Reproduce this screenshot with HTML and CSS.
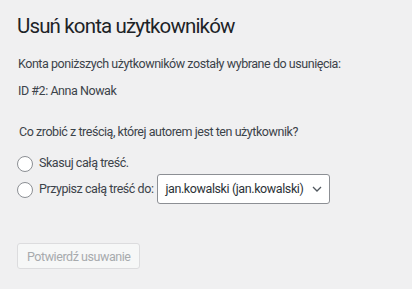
FILE: index.html
```html
<!DOCTYPE html>
<html lang="pl">
<head>
    <meta charset="UTF-8">
    <meta name="viewport" content="width=device-width, initial-scale=1.0">
    <title>Usuń konta użytkowników</title>
    <link rel="stylesheet" href="styles.css">
</head>
<body>
    <div class="wrap">
        <h1>Usuń konta użytkowników</h1>
        <p class="intro">Konta poniższych użytkowników zostały wybrane do usunięcia:</p>
        <ul class="users">
            <li>ID #2: Anna Nowak</li>
        </ul>

        <fieldset class="content-choice">
            <p class="legend">Co zrobić z treścią, której autorem jest ten użytkownik?</p>
            <label class="choice">
                <input type="radio" name="delete_option">
                <span>Skasuj całą treść.</span>
            </label>
            <label class="choice choice-select">
                <input type="radio" name="delete_option">
                <span>Przypisz całą treść do:</span>
                <span class="select-box">
                    <span>jan.kowalski (jan.kowalski)</span>
                    <svg class="chevron" width="10" height="10" viewBox="0 0 10 10"><path d="M1 3l4 4 4-4" fill="none" stroke="#50575e" stroke-width="1.3"/></svg>
                </span>
            </label>
        </fieldset>

        <button class="button" disabled>Potwierdź usuwanie</button>
    </div>
</body>
</html>
```

FILE: styles.css
```css
body {
    margin: 0;
    background-color: #f0f0f1;
    color: #3c434a;
    font-family: Roboto, "Liberation Sans", sans-serif;
    font-size: 12.5px;
    letter-spacing: -0.45px;
    line-height: 18px;
}

.wrap {
    padding: 0 17px;
}

h1 {
    margin: 0;
    padding: 12px 0 0;
    font-size: 20.5px;
    font-weight: 400;
    letter-spacing: -0.85px;
    line-height: 29px;
    color: #1d2327;
}

p {
    margin: 0;
}

.intro {
    margin-top: 14px;
    padding-left: 1px;
}

.users {
    list-style: none;
    margin: 9px 0 0;
    padding: 0 0 0 1px;
}

/* Wybór treści */
.content-choice {
    border: 0;
    margin: 23px 0 0;
    padding: 0;
}
.legend {
    margin-bottom: 13px;
    padding-left: 2px;
}
.choice {
    display: flex;
    align-items: center;
    gap: 6px;
}
.choice input {
    flex-shrink: 0;
    appearance: none;
    width: 16px;
    height: 16px;
    margin: 1px 0 0;
    border: 1px solid #8c8f94;
    border-radius: 50%;
    background-color: #fff;
}
.choice-select {
    margin-top: 2px;
}
.select-box {
    display: flex;
    flex-shrink: 0;
    align-items: center;
    justify-content: space-between;
    box-sizing: border-box;
    width: 173px;
    height: 30px;
    margin-left: -2px;
    padding: 0 7px 0 7px;
    border: 1px solid #8c8f94;
    border-radius: 3px;
    background-color: #fff;
    color: #2c3338;
    font-size: 12.5px;
    letter-spacing: -0.4px;
    white-space: nowrap;
}
.chevron {
    display: block;
}

/* Przycisk */
.button {
    display: block;
    box-sizing: border-box;
    margin-top: 39px;
    height: 26px;
    padding: 0 9px;
    border: 1px solid #dcdcde;
    border-radius: 3px;
    background-color: #f6f7f7;
    color: #a7aaad;
    font-family: inherit;
    font-size: 12.5px;
    letter-spacing: -0.45px;
}
```
